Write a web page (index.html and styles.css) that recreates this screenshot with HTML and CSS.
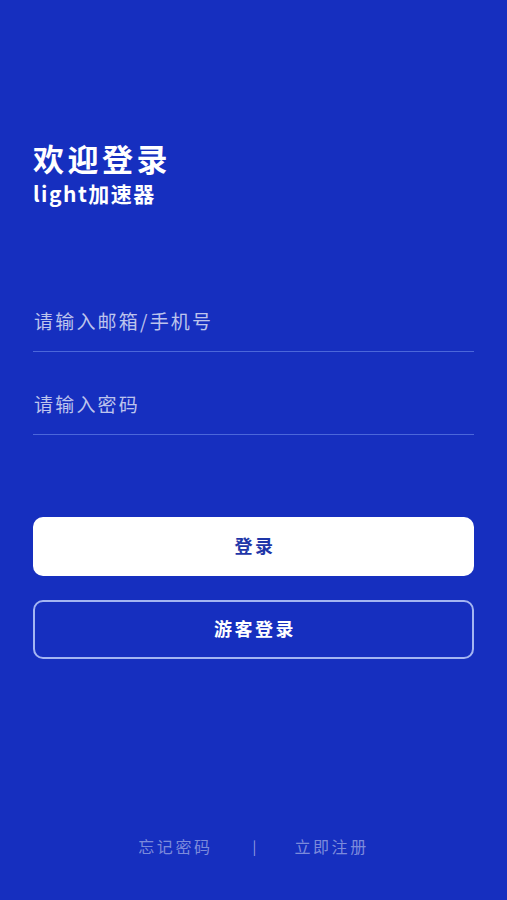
FILE: index.html
```html
<!DOCTYPE html>
<html lang="zh">
<head>
  <meta charset="UTF-8" />
  <meta name="viewport" content="width=device-width, initial-scale=1.0" />
  <title>登录 - light加速器</title>
  <link rel="stylesheet" href="styles.css">
</head>
<body>
  <div class="page">
    <div class="heading">
      <h1>欢迎登录</h1>
      <p class="app-name">light加速器</p>
    </div>
    <form class="login-form">
      <div class="field">
        <input type="text" placeholder="请输入邮箱/手机号">
      </div>
      <div class="field">
        <input type="password" placeholder="请输入密码">
      </div>
      <div class="actions">
        <button type="button" class="btn btn-primary">登录</button>
        <button type="button" class="btn btn-outline">游客登录</button>
      </div>
    </form>
    <div class="footer">
      <a href="#">忘记密码</a>
      <span class="sep">|</span>
      <a href="#">立即注册</a>
    </div>
  </div>
</body>
</html>
```

FILE: styles.css
```css
* {
  box-sizing: border-box;
}

html, body {
  margin: 0;
  height: 100%;
}

body {
  background-color: #162fbf;
  font-family: "Noto Sans CJK SC", "Noto Sans", sans-serif;
  color: #fff;
}

.page {
  height: 900px;
  padding: 137px 33px 0;
  display: flex;
  flex-direction: column;
}

.heading h1 {
  margin: 0;
  font-size: 31px;
  font-weight: 600;
  letter-spacing: 3.5px;
  line-height: 42px;
}

.app-name {
  margin: 0;
  font-size: 21px;
  font-weight: 600;
  letter-spacing: 1.5px;
  line-height: 28px;
}

.login-form {
  margin-top: 83px;
}

.field {
  border-bottom: 1px solid rgba(120, 150, 240, 0.55);
  height: 83px;
  display: flex;
  align-items: flex-end;
  padding-bottom: 17px;
}

.field:first-child {
  height: 62px;
}

.field input {
  width: 100%;
  background: transparent;
  border: none;
  outline: none;
  padding: 0 0 0 1px;
  font-family: inherit;
  font-size: 19px;
  letter-spacing: 2.2px;
  color: #fff;
}

.field input::placeholder {
  color: rgba(255, 255, 255, 0.72);
}

.actions {
  margin-top: 82px;
  display: flex;
  flex-direction: column;
  gap: 24px;
}

.btn {
  width: 100%;
  height: 59px;
  border-radius: 10px;
  font-family: inherit;
  font-size: 18px;
  font-weight: 600;
  letter-spacing: 2.5px;
  padding: 0 0 4px 3px;
  cursor: pointer;
}

.btn-primary {
  background-color: #fff;
  color: #1e36a8;
  border: none;
}

.btn-outline {
  background: transparent;
  color: #fff;
  border: 2px solid rgba(200, 215, 255, 0.8);
}

.footer {
  margin-top: auto;
  margin-bottom: 42px;
  display: flex;
  justify-content: center;
  align-items: center;
  font-size: 16px;
  letter-spacing: 2.6px;
  color: rgba(255, 255, 255, 0.45);
}

.footer a {
  color: inherit;
  text-decoration: none;
}

.footer .sep {
  margin: 0 38px 0 40px;
  font-size: 14px;
  letter-spacing: 0;
  color: rgba(255, 255, 255, 0.55);
}
```
